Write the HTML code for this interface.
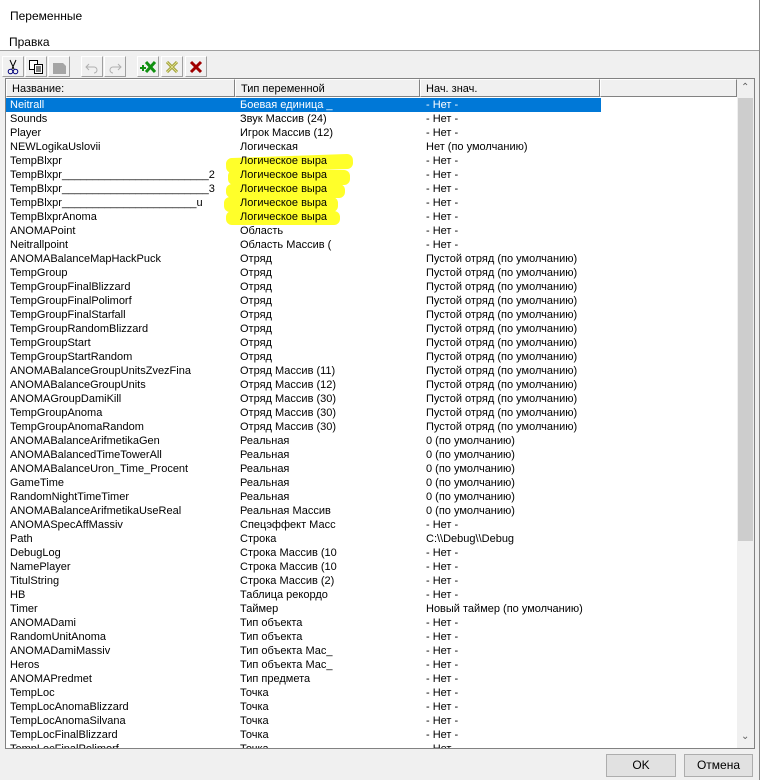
<!DOCTYPE html>
<html><head><meta charset="utf-8"><style>
*{margin:0;padding:0;box-sizing:border-box}
body{width:760px;height:780px;background:#f0f0f0;position:relative;overflow:hidden;font-family:"Liberation Sans","DejaVu Sans",sans-serif;font-size:11px;color:#000}
.abs{position:absolute}
#top{left:0;top:0;width:760px;height:51px;background:#fff;border-bottom:1px solid #a0a0a0}
.tb{position:absolute;top:56px;width:22px;height:21px;border:1px solid #fff;border-right-color:#a0a0a0;border-bottom-color:#a0a0a0;background:#f0f0f0}
#list{left:5px;top:78px;width:750px;height:671px;border:1px solid #828282;background:#fff;overflow:hidden}
.hd{position:absolute;top:0;height:18px;background:#f0f0f0;border:1px solid #fff;border-right-color:#828282;border-bottom-color:#828282;padding:3px 0 0 5px;line-height:12px}
.row{position:absolute;left:0;height:14px;line-height:15px;white-space:nowrap;width:730px}
.row span{position:absolute;top:0}
.c1{left:4px}.c2{left:234px}.c3{left:420px}
.sel{background:#0078d7;color:#fff;width:595px}
.yl{position:absolute;background:#ffff2a;border-radius:6px}
.btn{position:absolute;top:754px;height:23px;border:1px solid #adadad;background:#e1e1e1;text-align:center;line-height:21px;font-size:12px}
</style></head><body>
<div id="top" class="abs"></div>
<div class="abs" style="left:10px;top:9px;font-size:12px">Переменные</div>
<div class="abs" style="left:9px;top:35px;font-size:12px">Правка</div>
<div class="abs" style="left:759px;top:0;width:1px;height:780px;background:#888"></div>

<div class="tb" style="left:2px"><svg width="20" height="19"><g stroke="#000" fill="none" stroke-width="1"><path d="M7 3L11 12M13 3L9 12"/><circle cx="7.5" cy="14.5" r="2.3" stroke="#00007a"/><circle cx="12.5" cy="14.5" r="2.3" stroke="#00007a"/></g></svg></div>
<div class="tb" style="left:25px"><svg width="20" height="19"><g stroke="#000" fill="#fff"><rect x="3.5" y="3.5" width="8" height="9"/><rect x="8.5" y="7.5" width="8" height="9"/><path d="M10 10h5M10 12h5M10 14h5"/></g></svg></div>
<div class="tb" style="left:48px"><svg width="20" height="19"><path d="M4 6h10l3 3v8H4z" fill="#a5a5a5"/></svg></div>
<div class="tb" style="left:81px"><svg width="20" height="19"><path d="M7 7L4 10l3 3M4 10h8a3 3 0 0 1 0 6" stroke="#b0b0b0" fill="none"/></svg></div>
<div class="tb" style="left:104px"><svg width="20" height="19"><path d="M13 7l3 3-3 3M16 10H8a3 3 0 0 0 0 6" stroke="#b0b0b0" fill="none"/></svg></div>
<div class="tb" style="left:137px"><svg width="20" height="19"><path d="M8 5l9 10M17 5L8 15" stroke="#109010" stroke-width="3"/><path d="M2 11h6M5 8v6" stroke="#109010" stroke-width="2"/></svg></div>
<div class="tb" style="left:161px"><svg width="20" height="19"><path d="M5 5l10 10M15 5L5 15" stroke="#9a9a30" stroke-width="3"/><path d="M5 5l10 10M15 5L5 15" stroke="#e0e090" stroke-width="1"/></svg></div>
<div class="tb" style="left:185px"><svg width="20" height="19"><path d="M5 5l10 10M15 5L5 15" stroke="#a00000" stroke-width="3"/></svg></div>

<div id="list" class="abs">
<div class="hd" style="left:0;width:229px">Название:</div>
<div class="hd" style="left:229px;width:185px">Тип переменной</div>
<div class="hd" style="left:414px;width:180px">Нач. знач.</div>
<div class="hd" style="left:594px;width:137px"></div>
<div class="abs" style="left:731px;top:0;width:17px;height:669px;background:#f0f0f0"></div>
<div class="abs" style="left:732px;top:19px;width:15px;height:443px;background:#cdcdcd"></div>
<div class="abs" style="left:735px;top:3px;color:#606060;font-size:10px">&#8963;</div>
<div class="abs" style="left:735px;top:652px;color:#606060;font-size:10px">&#8964;</div>
<div class="yl" style="left:220px;top:77px;width:127px;height:15px;transform:rotate(-2deg)"></div>
<div class="yl" style="left:222px;top:91px;width:122px;height:15px"></div>
<div class="yl" style="left:220px;top:105px;width:119px;height:14px"></div>
<div class="yl" style="left:218px;top:118px;width:114px;height:15px"></div>
<div class="yl" style="left:220px;top:132px;width:114px;height:14px"></div>
<div id="rows"></div>
</div>
<div class="btn" style="left:606px;width:70px">OK</div>
<div class="btn" style="left:684px;width:69px">Отмена</div>
<script>
var d=[["Neitrall","Боевая единица _","- Нет -"],["Sounds","Звук Массив (24)","- Нет -"],["Player","Игрок Массив (12)","- Нет -"],["NEWLogikaUslovii","Логическая","Нет (по умолчанию)"],["TempBlxpr","Логическое выра","- Нет -"],["TempBlxpr________________________2","Логическое выра","- Нет -"],["TempBlxpr________________________3","Логическое выра","- Нет -"],["TempBlxpr______________________u","Логическое выра","- Нет -"],["TempBlxprAnoma","Логическое выра","- Нет -"],["ANOMAPoint","Область","- Нет -"],["Neitrallpoint","Область Массив (","- Нет -"],["ANOMABalanceMapHackPuck","Отряд","Пустой отряд (по умолчанию)"],["TempGroup","Отряд","Пустой отряд (по умолчанию)"],["TempGroupFinalBlizzard","Отряд","Пустой отряд (по умолчанию)"],["TempGroupFinalPolimorf","Отряд","Пустой отряд (по умолчанию)"],["TempGroupFinalStarfall","Отряд","Пустой отряд (по умолчанию)"],["TempGroupRandomBlizzard","Отряд","Пустой отряд (по умолчанию)"],["TempGroupStart","Отряд","Пустой отряд (по умолчанию)"],["TempGroupStartRandom","Отряд","Пустой отряд (по умолчанию)"],["ANOMABalanceGroupUnitsZvezFina","Отряд Массив (11)","Пустой отряд (по умолчанию)"],["ANOMABalanceGroupUnits","Отряд Массив (12)","Пустой отряд (по умолчанию)"],["ANOMAGroupDamiKill","Отряд Массив (30)","Пустой отряд (по умолчанию)"],["TempGroupAnoma","Отряд Массив (30)","Пустой отряд (по умолчанию)"],["TempGroupAnomaRandom","Отряд Массив (30)","Пустой отряд (по умолчанию)"],["ANOMABalanceArifmetikaGen","Реальная","0 (по умолчанию)"],["ANOMABalancedTimeTowerAll","Реальная","0 (по умолчанию)"],["ANOMABalanceUron_Time_Procent","Реальная","0 (по умолчанию)"],["GameTime","Реальная","0 (по умолчанию)"],["RandomNightTimeTimer","Реальная","0 (по умолчанию)"],["ANOMABalanceArifmetikaUseReal","Реальная Массив","0 (по умолчанию)"],["ANOMASpecAffMassiv","Спецэффект Масс","- Нет -"],["Path","Строка","C:\\\\Debug\\\\Debug"],["DebugLog","Строка Массив (10","- Нет -"],["NamePlayer","Строка Массив (10","- Нет -"],["TitulString","Строка Массив (2)","- Нет -"],["HB","Таблица рекордо","- Нет -"],["Timer","Таймер","Новый таймер (по умолчанию)"],["ANOMADami","Тип объекта","- Нет -"],["RandomUnitAnoma","Тип объекта","- Нет -"],["ANOMADamiMassiv","Тип объекта Мас_","- Нет -"],["Heros","Тип объекта Мас_","- Нет -"],["ANOMAPredmet","Тип предмета","- Нет -"],["TempLoc","Точка","- Нет -"],["TempLocAnomaBlizzard","Точка","- Нет -"],["TempLocAnomaSilvana","Точка","- Нет -"],["TempLocFinalBlizzard","Точка","- Нет -"],["TempLocFinalPolimorf","Точка","- Нет -"]];
var h="";d.forEach(function(r,i){h+='<div class="row'+(i==0?' sel':'')+'" style="top:'+(19+i*14)+'px"><span class="c1">'+r[0]+'</span><span class="c2">'+r[1]+'</span><span class="c3">'+r[2]+'</span></div>'});
document.getElementById("rows").innerHTML=h;
</script>
</body></html>
